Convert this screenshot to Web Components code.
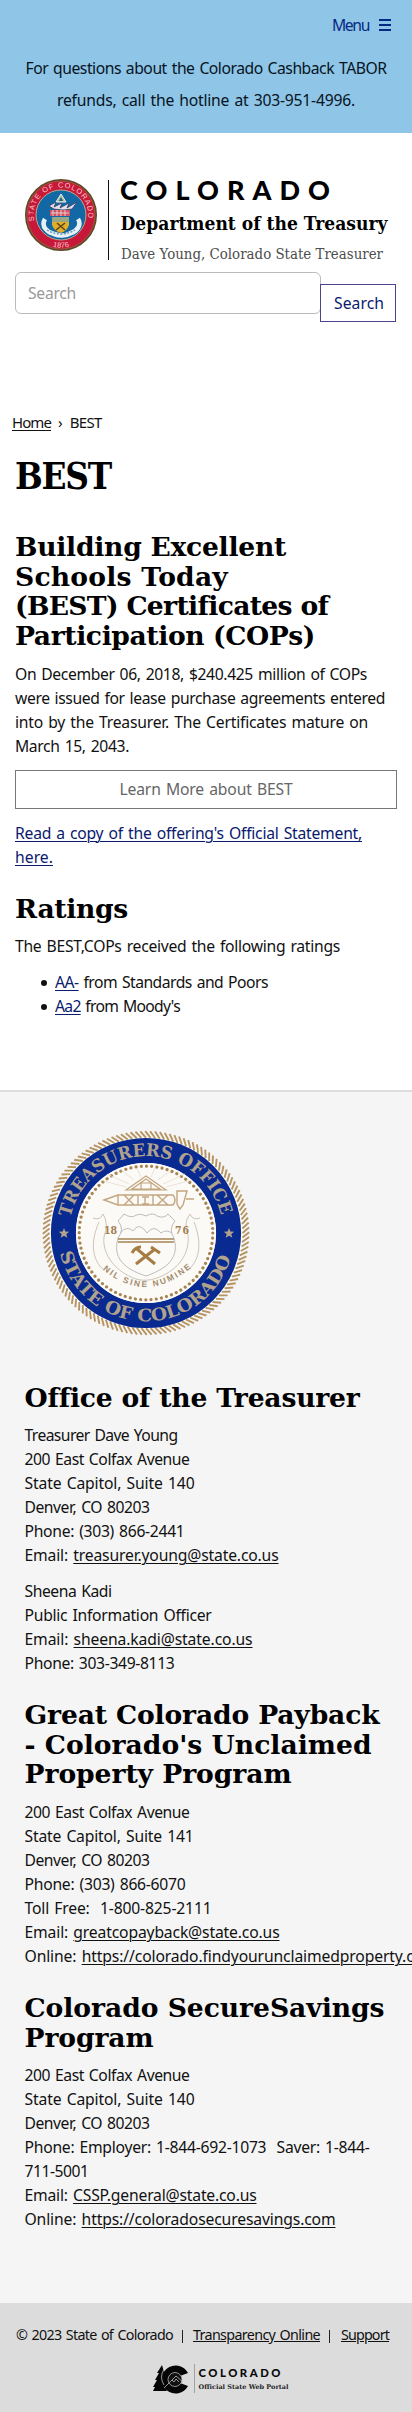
<!DOCTYPE html>
<html lang="en">
<head>
<meta charset="utf-8">
<meta name="viewport" content="width=device-width">
<title>BEST | Colorado Department of the Treasury</title>
<style>
html{overflow-x:hidden}
body{margin:0;background:#fff;color:#111;font:15.7px/24px "Noto Sans",sans-serif;word-spacing:1.3px;overflow-x:hidden}
a{color:inherit;text-decoration:underline;text-decoration-thickness:1px;text-underline-offset:2px}
main a,rating-list a{color:#0a1a6e}
</style>
</head>
<body>
<site-banner></site-banner>
<site-header></site-header>
<main>
<bread-crumb></bread-crumb>
<page-content>
<slab-heading level="1"><text-line w="96">BEST</text-line></slab-heading>
<slab-heading style="margin-top:35px"><text-line w="271">Building Excellent</text-line><text-line w="213">Schools Today</text-line><text-line w="311">(BEST) Certificates of</text-line><text-line w="300">Participation (COPs)</text-line></slab-heading>
<text-block><text-line w="352">On December 06, 2018, $240.425 million of COPs</text-line><text-line w="370">were issued for lease purchase agreements entered</text-line><text-line w="353">into by the Treasurer. The Certificates mature on</text-line><text-line w="114">March 15, 2043.</text-line></text-block>
<outline-button><text-line w="173">Learn More about BEST</text-line></outline-button>
<text-block><text-line w="347"><a href="#">Read a copy of the offering's Official Statement,</a></text-line><text-line w="38"><a href="#">here.</a></text-line></text-block>
<slab-heading><text-line w="113">Ratings</text-line></slab-heading>
<text-block><text-line w="325">The BEST,COPs received the following ratings</text-line></text-block>
<rating-list><rating-item><text-line w="213"><a href="#">AA-</a> from Standards and Poors</text-line></rating-item><rating-item><text-line w="125"><a href="#">Aa2</a> from Moody's</text-line></rating-item></rating-list>
</page-content>
</main>
<office-panel>
<treasurer-seal></treasurer-seal>
<slab-heading><text-line w="334">Office of the Treasurer</text-line></slab-heading>
<text-block><text-line w="153">Treasurer Dave Young</text-line><text-line w="165">200 East Colfax Avenue</text-line><text-line w="170">State Capitol, Suite 140</text-line><text-line w="125">Denver, CO 80203</text-line><text-line w="160">Phone: (303) 866-2441</text-line><text-line w="254">Email: <a href="#">treasurer.young@state.co.us</a></text-line></text-block>
<text-block><text-line w="87">Sheena Kadi</text-line><text-line w="187">Public Information Officer</text-line><text-line w="228">Email: <a href="#">sheena.kadi@state.co.us</a></text-line><text-line w="150">Phone: 303-349-8113</text-line></text-block>
<slab-heading><text-line w="355">Great Colorado Payback</text-line><text-line w="347">- Colorado's Unclaimed</text-line><text-line w="267">Property Program</text-line></slab-heading>
<text-block><text-line w="165">200 East Colfax Avenue</text-line><text-line w="169">State Capitol, Suite 141</text-line><text-line w="125">Denver, CO 80203</text-line><text-line w="161">Phone: (303) 866-6070</text-line><text-line w="187">Toll Free:&nbsp; 1-800-825-2111</text-line><text-line w="255">Email: <a href="#">greatcopayback@state.co.us</a></text-line><text-line w="413">Online: <a href="#">https://colorado.findyourunclaimedproperty.com</a></text-line></text-block>
<slab-heading><text-line w="360">Colorado SecureSavings</text-line><text-line w="129">Program</text-line></slab-heading>
<text-block><text-line w="165">200 East Colfax Avenue</text-line><text-line w="170">State Capitol, Suite 140</text-line><text-line w="125">Denver, CO 80203</text-line><text-line w="345">Phone: Employer: 1-844-692-1073&nbsp; Saver: 1-844-</text-line><text-line w="64">711-5001</text-line><text-line w="232">Email: <a href="#">CSSP.general@state.co.us</a></text-line><text-line w="311">Online: <a href="#">https://coloradosecuresavings.com</a></text-line></text-block>
</office-panel>
<site-footer></site-footer>
<script>
const define = (name, html, ready) => customElements.define(name, class extends HTMLElement {
  connectedCallback() {
    if (this.shadowRoot) return;
    this.attachShadow({mode: 'open'}).innerHTML = html;
    if (ready) ready(this, this.shadowRoot);
  }
});

define('site-banner', `<style>
:host{display:block;box-sizing:border-box;height:133px;background:#8fc5e6;padding-top:13px}
.menu{display:flex;justify-content:flex-end;align-items:center;padding-right:21px;gap:10px;color:#042a83;height:24px}
svg{display:block}
.note{margin-top:15px;display:flex;flex-direction:column;align-items:center;line-height:32px;color:#06141f}
</style>
<div class="menu"><text-line w="37">Menu</text-line><svg width="12" height="12" viewBox="0 0 12 12"><path d="M0 1h12M0 6h12M0 11h12" stroke="currentColor" stroke-width="2"/></svg></div>
<div class="note"><text-line w="361">For questions about the Colorado Cashback TABOR</text-line><text-line w="298">refunds, call the hotline at 303-951-4996.</text-line></div>`);

define('state-seal', `<style>:host{display:block;width:74px;height:74px}svg{display:block}</style>
<svg width="74" height="74" viewBox="-37 -37 74 74">
<circle r="35.2" fill="#c8183a" stroke="#5b4a26" stroke-width="1.6"/><circle r="34" fill="none" stroke="#8a7a45" stroke-width=".6"/>
<circle r="25" fill="#1267a5" stroke="#b9a98d" stroke-width="1"/>
<defs><path id="t" d="M-26.6 6A27.3 27.3 0 1 1 26.6 6"/><path id="b" d="M-15 29A32.6 32.6 0 0 0 15 29"/></defs>
<g font-family="Liberation Sans" font-size="7.4" fill="#f6c9c8" word-spacing="0"><text><textPath href="#t" textLength="95">STATE OF COLORADO</textPath></text><text><textPath href="#b" startOffset="50%" text-anchor="middle">1876</textPath></text></g>
<path d="M0-21L5-13H-5Z" fill="#9fc3a0" stroke="#eee" stroke-width="1"/><path d="M-2-14L0-18L2-14Z" fill="#305b74"/>
<path d="M-12-9L-5-13L-7-8L1-12L-1-7L8-12L6-7L16-13L11-6L2-5L-7-6Z" fill="#dfe2ed" stroke="#413455" stroke-width=".7"/>
<path d="M-11-5H9V1H-11Z" fill="#d15460"/><path d="M-10-2H8M-8-5V1M-4-5V1M0-5V1M4-5V1" stroke="#ead4da" stroke-width=".9"/>
<path d="M-16 4C-21 12-12 18-7 19C-2 21 5 21 10 18C16 16 21 10 17 4" fill="none" stroke="#e8f1f5" stroke-width="4.6"/>
<path d="M-14 15Q0 23 14 15" fill="none" stroke="#5c93b9" stroke-width="1.4" stroke-dasharray="2 1.5"/>
<path d="M-9 2H8V10Q6 16 0 18Q-7 16-9 10Z" fill="#e2ad28"/><path d="M-9 2H8V7H-9Z" fill="#9aa787"/><path d="M-5 15L4 8M-4 8L4 15" stroke="#58431b" stroke-width="1.5"/>
</svg>`);

define('site-header', `<style>
:host{display:block;height:267px;box-sizing:border-box;padding:45px 0 0 15px}
.brand{display:flex;align-items:flex-start;height:94px}
state-seal{margin:0 0 0 9px}
.rule{width:1px;height:80px;margin:2px 11px 0 10px;background:#111}
.words{display:block;overflow:visible;word-spacing:0}
.search{display:flex;align-items:flex-start}
.field{box-sizing:border-box;width:306px;height:42px;border:1px solid #bbb;border-radius:6px;padding:8px 12px;color:#999}
.go{box-sizing:border-box;width:76px;height:38px;border:1px solid #4c448c;margin:12px 0 0 -1px;padding:6px 0 0 13px;color:#0a1a6e;background:#fff}
</style>
<div class="brand"><state-seal></state-seal><div class="rule"></div>
<svg class="words" width="275" height="90" viewBox="0 0 275 90">
<text x="0" y="22" font-family="Lato" font-weight="900" font-size="27" textLength="210" fill="#000">COLORADO</text>
<text x=".5" y="52" font-family="DejaVu Serif" font-weight="700" font-size="17.6" textLength="267" lengthAdjust="spacingAndGlyphs" fill="#000">Department of the Treasury</text>
<text x="1" y="81" font-family="DejaVu Serif" font-weight="400" font-size="14.6" textLength="262" lengthAdjust="spacingAndGlyphs" fill="#4d4d4d">Dave Young, Colorado State Treasurer</text>
</svg></div>
<div class="search"><div class="field"><text-line w="48">Search</text-line></div><div class="go"><text-line w="50">Search</text-line></div></div>`);

define('bread-crumb', `<style>
:host{display:flex;gap:7px;padding:10px 0 1px 12px;font-size:15px;height:24px}
a{color:#111;text-underline-offset:2px}
</style><text-line w="39"><a href="#">Home</a></text-line><span>›</span><text-line w="32">BEST</text-line>`);

define('page-content', `<style>
:host{display:block;box-sizing:border-box;height:657px;padding:22px 15px 0;border-bottom:2px solid #ddd}
</style><slot></slot>`);

define('slab-heading', `<style>
:host{display:block;font:700 26.6px/29.7px "DejaVu Serif",serif;word-spacing:0;color:#000;margin:24.7px 0 11px}
:host([level="1"]){font-size:36.5px;line-height:40px;font-stretch:condensed;margin-top:0}
</style><slot></slot>`);

define('text-block', `<style>:host{display:block;margin:0 0 12px}</style><slot></slot>`);

define('outline-button', `<style>
:host{display:flex;justify-content:center;align-items:center;box-sizing:border-box;height:39px;margin:0 0 12px;border:1px solid #777;color:#666}
</style><slot></slot>`);

define('rating-list', `<style>:host{display:block;padding-left:25px}</style><slot></slot>`);
define('rating-item', `<style>
:host{display:flex;align-items:center}
i{width:6px;height:6px;border-radius:50%;background:#111;margin:2px 8px 0 1px}
</style><i></i><slot></slot>`);

define('office-panel', `<style>
:host{display:block;box-sizing:border-box;height:1211px;background:#f5f5f5;padding:37px 0 0 24.5px;overflow:hidden}
</style><slot></slot>`);

define('treasurer-seal', `<style>:host{display:block;height:229px;padding-left:15.5px;word-spacing:0}svg{display:block}</style>
<svg width="212" height="208" viewBox="-106 -104 212 208">
<circle r="98" fill="#fbf9f4"/><g id="rope" stroke="#b59462" stroke-width="1.9"></g>
<circle r="82.6" fill="none" stroke="#082a91" stroke-width="25"/>
<circle r="70" fill="#fbfaf7"/>
<circle r="66.8" fill="none" stroke="#a78454" stroke-width="3.2" stroke-linecap="round" stroke-dasharray=".01 5.236"/>
<defs><path id="t" d="M-75.4-15.5A77 77 0 0 1 75.4-15.5"/><path id="b" d="M-86 20A88.3 88.3 0 0 0 86 20"/><path id="m" d="M-45 35Q0 74 47 33"/></defs>
<g font-family="DejaVu Serif" font-stretch="condensed" font-weight="700" fill="#b1a28e"><text font-size="17.5"><textPath href="#t" textLength="208" lengthAdjust="spacingAndGlyphs">TREASURERS OFFICE</textPath></text>
<text font-size="17.5"><textPath href="#b" textLength="232" lengthAdjust="spacingAndGlyphs">STATE OF COLORADO</textPath></text></g>
<path id="star" d="M-82-5l1.4 3.5 3.8.2-2.9 2.4 1 3.6-3.3-2-3.3 2 1-3.6-2.9-2.4 3.8-.2Z" fill="#b1a28e"/><use href="#star" x="165"/>
<g fill="none" stroke="#e5d9c8" stroke-width=".7"><path d="M-20-46L-46-53M-17-49L-39-59M-12-53L-25-63M-5-56L-9-65M5-56L9-65M12-53L25-63M17-49L39-59M20-46L46-53"/></g>
<g fill="none" stroke="#c3a67f" stroke-width="1.2"><path d="M0-57L20-43H-20ZM0-54L14-44H-14ZM-5-50H5V-44H-5Z"/>
<path d="M-42-33L-28-38V-28ZM-28-38H27Q31-33 27-28H-28ZM-22-38L-12-28M-12-38L-22-28M-8-38V-28M-4-36H3M-1-36V-29M-4-29H3M7-38V-28M11-38L22-28M22-38L11-28M31-42H41L37-28L34-24L31-29ZM40-34H48" stroke-width="1.4"/></g>
<g fill="none" stroke="#b5b6b4" stroke-width=".9"><path d="M-22-19Q-14-14-10-18Q-5-20 0-17Q7-21 11-17Q18-14 22-19L29-12Q22-4 28 5C35 29 14 38 0 43C-15 38-35 29-28 5Q-21-4-28-12Z"/>
<path d="M-26 0Q-19-8-13-2Q-7-12 1 0Q8-9 15 0Q20-4 26 0" /><path d="M-53-15Q-46-12-43-19Q-37-10-42 4C-44 22-30 39-10 46Q0 49 11 45C33 37 44 20 42 2Q37-10 44-19Q47-12 54-15M-47-11C-58 14-51 30-42 37M48-11C58 14 51 30 42 37" stroke="#c6bdb0"/></g>
<path d="M-28 6H28M-28 9H28" stroke="#a78454" stroke-width="1.3"/>
<path d="M-9 16L9 31M9 16L-10 31M-14 20Q-11 14-5 14M5 14L14 20" fill="none" stroke="#a67c43" stroke-width="3"/>
<g font-family="DejaVu Serif" font-stretch="condensed" font-weight="700" fill="#a47f50" font-size="10.5"><text x="-42" y="1" textLength="13">18</text><text x="29" y="1" textLength="14">76</text></g>
<text font-family="Liberation Sans" font-weight="700" font-size="8.4" fill="#a58a6a"><textPath href="#m" startOffset="2" textLength="98">NIL SINE NUMINE</textPath></text>
</svg>`, (el, root) => {
  const point = (r, a) => `${(r * Math.cos(a)).toFixed(2)} ${(r * .987 * Math.sin(a)).toFixed(2)}`;
  let d = '';
  for (let i = 0; i < 132; i++) {
    const a = i * Math.PI * 2 / 132;
    d += `M${point(96.5, a)}L${point(103.2, a - .055)}`;
  }
  root.getElementById('rope').innerHTML = `<path d="${d}"/>`;
});

define('site-footer', `<style>
:host{display:block;box-sizing:border-box;height:109px;background:#dcdcdc;padding:20px 0 0 16px}
.row{display:flex;align-items:center;font-size:14.3px;height:24px}
b{width:1px;height:13px;background:#222;margin:2px 10px 0 9px}
a{color:#111}
svg{display:block;margin:15px 0 0 136px;word-spacing:0}
</style>
<div class="row"><text-line w="157">© 2023 State of Colorado</text-line><b></b><text-line w="127"><a href="#">Transparency Online</a></text-line><b style="margin-right:11px"></b><text-line w="48"><a href="#">Support</a></text-line></div>
<svg width="140" height="36" viewBox="0 0 140 36">
<path d="M36 11A14 14 0 1 0 36 24L28 21A6 6 0 1 1 28 14Z" fill="#050505"/>
<path d="M10 3L5 11H7L3 18H5L1 25H3L1 29H12L15 29Q7 20 12 10Z" fill="#050505"/>
<circle cx="23" cy="17.5" r="7" fill="#111" stroke="#c9c9c9" stroke-width=".7"/>
<path d="M12 26L24 14L31 20M20 18L22 20L24 17L27 20M12 7Q7 15 12 23" fill="none" stroke="#bbb" stroke-width=".8"/>
<path d="M42.5 2V31" stroke="#999" stroke-width=".9"/>
<text x="46.5" y="15" font-family="Lato" font-weight="900" font-size="11.3" textLength="82" fill="#080808">COLORADO</text>
<text x="46.5" y="27.3" font-family="DejaVu Serif" font-weight="700" font-size="6.4" textLength="90" lengthAdjust="spacingAndGlyphs" fill="#222">Official State Web Portal</text>
</svg>`);

/* Single line of copy, tracked so that it fills the measure given in "w". */
define('text-line', `<style>:host{display:block;white-space:pre;flex:none}</style><span><slot></slot></span>`, (el, root) => {
  const span = root.querySelector('span');
  const gap = el.getAttribute('w') - span.getBoundingClientRect().width;
  span.style.letterSpacing = (gap / el.textContent.length).toFixed(3) + 'px';
});
</script>
</body>
</html>
